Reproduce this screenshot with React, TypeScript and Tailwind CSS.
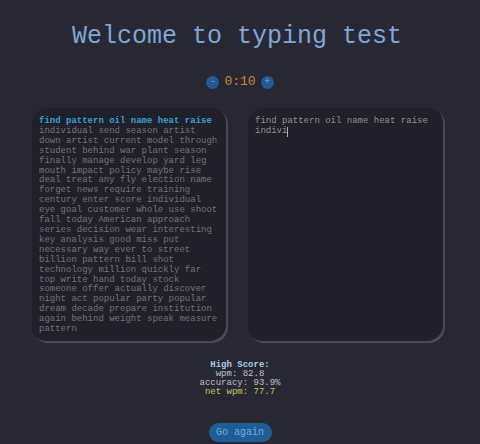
import { useState } from 'react'

const words = [
  'find pattern oil name heat raise',
  'individual send season artist',
  'down artist current model through',
  'student behind war plant season',
  'finally manage develop yard leg',
  'mouth impact policy maybe rise',
  'deal treat any fly election name',
  'forget news require training',
  'century enter score individual',
  'eye goal customer whole use shoot',
  'fall today American approach',
  'series decision wear interesting',
  'key analysis good miss put',
  'necessary way ever to street',
  'billion pattern bill shot',
  'technology million quickly far',
  'top write hand today stock',
  'someone offer actually discover',
  'night act popular party popular',
  'dream decade prepare institution',
  'again behind weight speak measure',
  'pattern',
]

export default function App() {
  const [seconds, setSeconds] = useState(10)

  return (
    <div className="min-h-screen w-full bg-[#272833] flex flex-col items-center font-['Liberation_Mono',monospace] pt-[21px]">
      <h1 className="text-[25px] leading-[32px] text-[#7ea6d6] pr-[6px]">Welcome to typing test</h1>

      <div className="mt-[21px] flex items-center gap-[5px]">
        <button
          onClick={() => setSeconds((s) => Math.max(5, s - 5))}
          className="w-[13px] h-[13px] rounded-full bg-[#1f5d93] text-[#7fb4e0] text-[9px] leading-none flex items-center justify-center"
        >
          -
        </button>
        <span className="text-[13px] leading-[16px] text-[#c7873e]">0:{String(seconds).padStart(2, '0')}</span>
        <button
          onClick={() => setSeconds((s) => s + 5)}
          className="w-[13px] h-[13px] rounded-full bg-[#1f5d93] text-[#7fb4e0] text-[9px] leading-none flex items-center justify-center"
        >
          +
        </button>
      </div>

      <div className="mt-[18px] flex gap-[20px] pr-[3px]">
        <div className="w-[196px] h-[235px] rounded-[16px] bg-[#1f2029] shadow-[inset_-2px_-2px_1px_#4b4c5b] px-[7px] pt-[9px] text-[9px] leading-[9.9px]">
          {words.map((line, i) => (
            <div key={i} className={i === 0 ? 'text-[#3c9fd8] font-bold' : 'text-[#727479]'}>
              {line}
            </div>
          ))}
        </div>
        <div className="w-[197px] h-[235px] rounded-[16px] bg-[#1f2029] shadow-[inset_-2px_-2px_1px_#4b4c5b] px-[7px] pt-[9px] text-[9px] leading-[9.9px] text-[#8e9096]">
          <div>find pattern oil name heat raise</div>
          <div className="flex items-center">
            indivi<span className="inline-block w-px h-[10px] bg-[#b0b0b0]" />
          </div>
        </div>
      </div>

      <div className="mt-[18px] flex flex-col items-center text-[9px] leading-[9px]">
        <div className="font-bold text-[#a9cbe9]">High Score:</div>
        <div className="text-[#b7c4d4]">wpm: 82.8</div>
        <div className="text-[#b7c4d4]">accuracy: 93.9%</div>
        <div className="text-[#c9c45c]">net wpm: 77.7</div>
      </div>

      <button className="mt-[26px] w-[63px] h-[19px] rounded-full bg-[#1f5d93] text-[#6fb0e2] text-[10px] leading-none">
        Go again
      </button>
    </div>
  )
}
